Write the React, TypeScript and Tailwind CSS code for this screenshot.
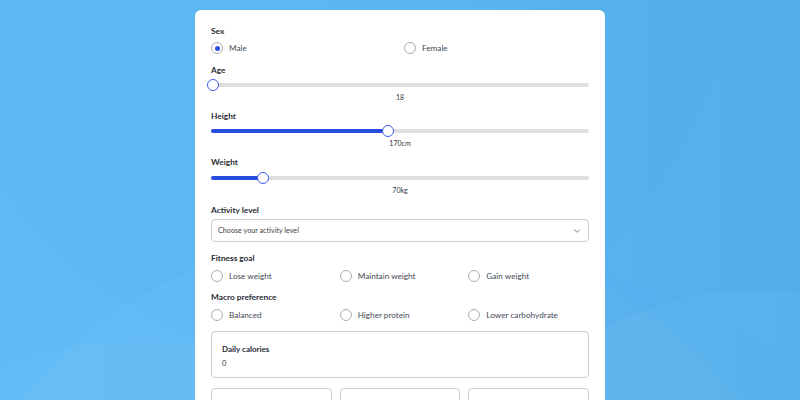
import { ChevronDown } from "lucide-react";

type Option = { label: string; checked?: boolean };

function Radio({ label, checked }: Option) {
    return (
        <label className="flex items-center gap-[6px] h-[14px]">
            <span className="w-[12px] h-[12px] rounded-full border border-[#a9adb8] bg-white flex items-center justify-center shrink-0">
                {checked && <span className="w-[5px] h-[5px] rounded-full bg-[#2a4de0]" />}
            </span>
            <span className="pt-[1px] text-[8.2px] text-[#444955] leading-none">{label}</span>
        </label>
    );
}

function Slider({ pct, value }: { pct: number; value: string }) {
    return (
        <div>
            <div className="h-[12px] flex items-center">
                <div className="relative w-full h-[4px] rounded-full bg-[#dedede]">
                    <div className="absolute left-0 top-0 h-full rounded-full bg-[#2a4de0]" style={{ width: `calc(2px + ${pct}%)` }} />
                    <div className="absolute inset-y-0 left-[2px] right-[2px]">
                        <span
                            className="absolute top-1/2 w-[12px] h-[12px] -translate-x-1/2 -translate-y-1/2 rounded-full bg-white border-[1.5px] border-[#3d5ce8]"
                            style={{ left: `${pct}%` }}
                        />
                    </div>
                </div>
            </div>
            <div className="mt-[1px] h-[10px] text-center text-[7px] leading-[10px] text-[#33363e]">{value}</div>
        </div>
    );
}

function Label({ children, className = "" }: { children: string; className?: string }) {
    return <div className={`h-[12px] text-[8.3px] leading-[12px] font-bold text-[#2a2c34] ${className}`}>{children}</div>;
}

export default function App() {
    return (
        <div className="relative w-[800px] h-[400px] overflow-hidden bg-gradient-to-r from-[#5fbbf6] via-[#5db8f4] to-[#52aeea] font-['Lato',sans-serif]">
            {/* faint background arcs */}
            <svg className="absolute inset-0" width="800" height="400" viewBox="0 0 800 400">
                <circle cx="330" cy="-40" r="400" fill="#3f9fe0" fillOpacity="0.05" />
                <circle cx="380" cy="700" r="470" fill="#ffffff" fillOpacity="0.03" />
                <circle cx="140" cy="720" r="380" fill="#ffffff" fillOpacity="0.025" />
                <circle cx="760" cy="620" r="330" fill="#ffffff" fillOpacity="0.04" />
                <circle cx="540" cy="640" r="370" fill="#3f9fe0" fillOpacity="0.04" />
            </svg>

            <div className="relative flex justify-center pt-[10px]">
                <div className="w-[410px] bg-white rounded-[6px] px-4 pt-[15px] pb-6">
                    <Label>Sex</Label>
                    <div className="mt-[4px] grid grid-cols-2 gap-2">
                        <Radio label="Male" checked />
                        <Radio label="Female" />
                    </div>

                    <Label className="mt-[9px]">Age</Label>
                    <div className="mt-[3px]">
                        <Slider pct={0} value="18" />
                    </div>

                    <Label className="mt-[8px]">Height</Label>
                    <div className="mt-[3px]">
                        <Slider pct={46.7} value="170cm" />
                    </div>

                    <Label className="mt-[8px]">Weight</Label>
                    <div className="mt-[4px]">
                        <Slider pct={13.3} value="70kg" />
                    </div>

                    <Label className="mt-[9px]">Activity level</Label>
                    <div className="mt-[3px] h-[23px] rounded-[4px] border border-[#c9ccd2] flex items-center justify-between pl-[6px] pr-[6px]">
                        <span className="pt-[2px] text-[7.2px] text-[#3c3f47]">Choose your activity level</span>
                        <ChevronDown size={10} strokeWidth={2} className="text-[#6b6f78]" />
                    </div>

                    <Label className="mt-[10px]">Fitness goal</Label>
                    <div className="mt-[5px] grid grid-cols-3 gap-2">
                        <Radio label="Lose weight" />
                        <Radio label="Maintain weight" />
                        <Radio label="Gain weight" />
                    </div>

                    <Label className="mt-[8px]">Macro preference</Label>
                    <div className="mt-[5px] grid grid-cols-3 gap-2">
                        <Radio label="Balanced" />
                        <Radio label="Higher protein" />
                        <Radio label="Lower carbohydrate" />
                    </div>

                    <div className="mt-[9px] h-[47px] rounded-[4px] border border-[#c9ccd2] px-[10px] pt-[11px]">
                        <div className="text-[8px] leading-[12px] font-bold text-[#2a2c34]">Daily calories</div>
                        <div className="mt-[4px] text-[7.5px] leading-[10px] text-[#33363e]">0</div>
                    </div>

                    <div className="mt-[10px] grid grid-cols-3 gap-2">
                        <div className="h-[47px] rounded-[4px] border border-[#c9ccd2]" />
                        <div className="h-[47px] rounded-[4px] border border-[#c9ccd2]" />
                        <div className="h-[47px] rounded-[4px] border border-[#c9ccd2]" />
                    </div>
                </div>
            </div>
        </div>
    );
}
